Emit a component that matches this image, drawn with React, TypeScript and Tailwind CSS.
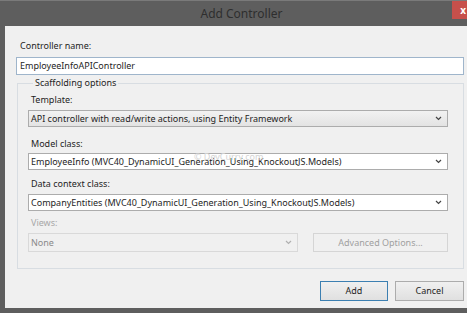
import React from "react";

const font = { fontFamily: '"Noto Sans", "Open Sans", sans-serif' };

function Chevron({ color = "#444" }: { color?: string }) {
  return (
    <svg width="7" height="5" viewBox="0 0 7 5" className="shrink-0">
      <path d="M1 1 L3.5 3.5 L6 1" fill="none" stroke={color} strokeWidth="1.2" />
    </svg>
  );
}

function Combo({
  text,
  className,
  disabled,
  gradient,
}: {
  text: string;
  className: string;
  disabled?: boolean;
  gradient?: boolean;
}) {
  return (
    <div
      className={
        "flex items-center justify-between pl-[2px] pr-[5px] border " +
        (disabled
          ? "border-[#d9d9d9] bg-[#f0f0f0] text-[#8a8a8a] "
          : gradient
          ? "border-[#acacac] bg-gradient-to-b from-[#f2f2f2] to-[#e3e3e3] text-[#1e1e1e] "
          : "border-[#acacac] bg-white text-[#1e1e1e] ") +
        className
      }
    >
      <span className="text-[9px] leading-[14px] whitespace-nowrap">{text}</span>
      <Chevron color={disabled ? "#b0b0b0" : "#444"} />
    </div>
  );
}

export default function App() {
  return (
    <div className="w-[467px] h-[313px] bg-[#5e5e5e] flex flex-col overflow-hidden" style={font}>
      <div className="h-[26px] relative flex items-center justify-center pl-[16px] border-t border-[#7a7a7a]">
        <span className="text-[12px] text-[#2e2e2e] leading-none">Add Controller</span>
        <div className="absolute right-0 top-0 w-[15px] h-[18px] bg-[#c7504b] flex items-center justify-end pr-[1px]">
          <span className="text-white text-[10px] font-bold leading-none">x</span>
        </div>
      </div>
      <div className="flex-1 ml-[5px] mb-[5px] bg-[#f0f0f0] flex flex-col pl-[11px] pr-[3px] text-[#1e1e1e]">
        <div className="mt-[13px] ml-[4px] text-[9px] leading-[14px]">Controller name:</div>
        <div className="mt-[4px] h-[18px] border border-[#9fb5cb] bg-white flex items-center pl-[3px]">
          <span className="text-[9px] leading-[14px]">EmployeeInfoAPIController</span>
        </div>
        <fieldset className="mt-[1px] ml-[1px] border border-[#d8dde2] h-[193px] pl-[10px] pr-[15px] relative">
          <legend className="ml-[5px] px-[2px] text-[9px] leading-[14px]">Scaffolding options</legend>
          <div className="mt-[3px] ml-[3px] text-[9px] leading-[14px]">Template:</div>
          <Combo text="API controller with read/write actions, using Entity Framework" className="mt-[3px] h-[17px]" gradient />
          <div className="mt-[10px] ml-[3px] text-[9px] leading-[14px]">Model class:</div>
          <Combo text="EmployeeInfo (MVC40_DynamicUI_Generation_Using_KnockoutJS.Models)" className="mt-[2px] h-[17px]" />
          <div className="mt-[7px] ml-[3px] text-[9px] leading-[14px]">Data context class:</div>
          <Combo text="CompanyEntities (MVC40_DynamicUI_Generation_Using_KnockoutJS.Models)" className="mt-[3px] h-[17px]" />
          <div className="mt-[5px] ml-[3px] text-[9px] leading-[14px] text-[#a8a8a8]">Views:</div>
          <div className="mt-[3px] flex gap-[15px]">
            <Combo text="None" className="w-[270px] h-[19px]" disabled />
            <div className="flex-1 h-[19px] border border-[#d5d5d5] bg-[#f0f0f0] flex items-center justify-center">
              <span className="text-[9px] leading-[14px] text-[#a0a0a0]">Advanced Options...</span>
            </div>
          </div>
          <span className="absolute left-[176px] top-[62px] text-[9px] leading-none text-[#d4d4d4] pointer-events-none">
            © DevCurry.com
          </span>
        </fieldset>
        <div className="mt-[12px] flex justify-end gap-[7px]">
          <div className="w-[68px] h-[20px] border border-[#3c7fb1] bg-gradient-to-b from-[#f0f0f0] to-[#e0e0e0] flex items-center justify-center">
            <span className="text-[9px] leading-[14px]">Add</span>
          </div>
          <div className="w-[69px] h-[20px] border border-[#acacac] bg-gradient-to-b from-[#f0f0f0] to-[#e0e0e0] flex items-center justify-center">
            <span className="text-[9px] leading-[14px]">Cancel</span>
          </div>
        </div>
      </div>
    </div>
  );
}
